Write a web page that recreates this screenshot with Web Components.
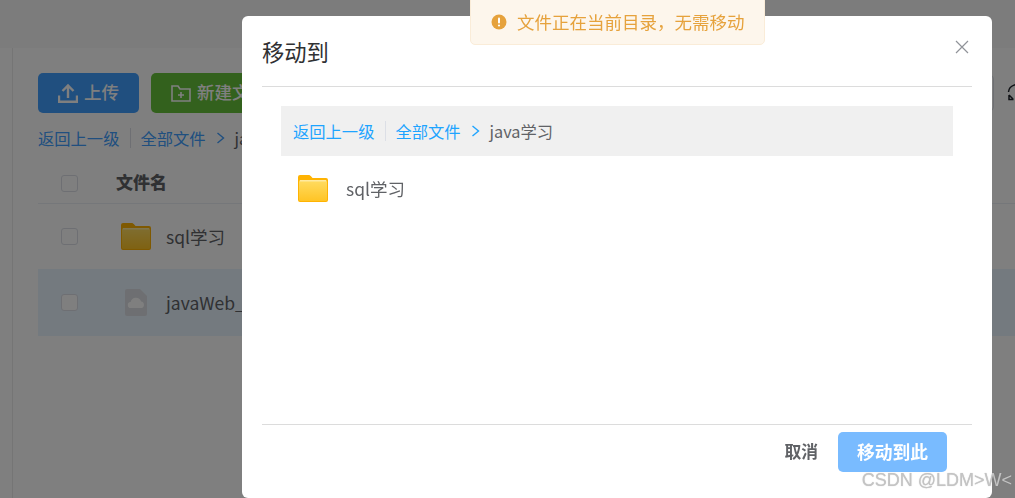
<!DOCTYPE html>
<html lang="zh">
<head>
<meta charset="utf-8">
<title>移动到</title>
<style>
    html, body { margin: 0; height: 100%; overflow: hidden; }
    body { font-family: "Noto Sans CJK SC", "Noto Sans", sans-serif; }
</style>
</head>
<body>
<file-page></file-page>
<move-dialog></move-dialog>
<warn-toast>文件正在当前目录，无需移动</warn-toast>
<water-mark>CSDN @LDM&gt;W&lt;</water-mark>

<script>
const FOLDER = `
    <svg viewBox="0 0 30 27" width="30" height="27">
        <defs>
            <linearGradient id="front" x1="0" y1="0" x2="0" y2="1">
                <stop offset="0" stop-color="#ffdc62"/>
                <stop offset="1" stop-color="#ffc425"/>
            </linearGradient>
        </defs>
        <path d="M2 0h8.500c1 0 1.600.4 2.300 1.100L14.500 3H28a2 2 0 0 1 2 2v20a2 2 0 0 1-2 2H2a2 2 0 0 1-2-2V2a2 2 0 0 1 2-2z" fill="#ffb302"/>
        <rect x="1" y="5" width="28" height="21" rx="1.500" fill="url(#front)"/>
        <rect x="2" y="5" width="26" height="1.500" fill="#ffeaa0"/>
    </svg>`

const ARROW = (color) => `<svg width="9" height="12" viewBox="0 0 9 12" fill="none" stroke="${color}" stroke-width="1.400"><path d="M1.500 1l6 5-6 5"/></svg>`

const pageTemplate = document.createElement('template')
pageTemplate.innerHTML = `
    <style>
        :host {
            display: block;
            height: 498px;
            overflow: hidden;
            background: #fff;
            color: #606266;
        }
        .top { height: 48px; background: #f9f9f9; }
        .body { display: flex; height: 450px; }
        .side { width: 12px; flex: none; border-right: 1px solid #eaeaea; }
        .main { flex: 1; min-width: 0; padding: 25px 0 0 25px; }
        .tools { display: flex; align-items: center; gap: 12px; height: 40px; }
        .btn {
            flex: none;
            box-sizing: border-box;
            display: flex;
            align-items: center;
            gap: 6px;
            height: 40px;
            padding: 0 0 3px 20px;
            border-radius: 5px;
            color: #fff;
            font-size: 17.500px;
            font-weight: 500;
            white-space: nowrap;
        }
        .upload { width: 101px; background: #409eff; }
        .create { width: 154px; background: #67c23a; }
        .btn svg { flex: none; margin-top: 3px; }
        .spacer { flex: 1; }
        .search { flex: none; width: 60px; height: 36px; margin-right: 1px; border: 1px solid #dcdfe6; border-radius: 4px; box-sizing: border-box; }
        .refresh { flex: none; width: 8px; height: 20px; overflow: hidden; margin-bottom: 1px; }
        .crumbs { display: flex; align-items: center; height: 26px; margin-top: 12px; font-size: 16.300px; color: #409eff; }
        .crumbs .back { padding-right: 11px; border-right: 1px solid #dcdfe6; line-height: 20px; margin-right: 9px; }
        .crumbs .arrow { margin: 0 10px; display: flex; }
        .crumbs .cur { color: #606266; }
        .head, .row { display: flex; align-items: center; }
        .head { height: 40px; margin-top: 12px; border-bottom: 1px solid #ebeef5; font-weight: 700; font-size: 17px; color: #606266; }
        .head b { margin-bottom: 3px; }
        .row { height: 65px; font-size: 17.500px; }
        .row.sel { height: 67px; background: #e8f4ff; }
        .check { flex: none; width: 15px; height: 15px; margin: 0 38px 0 23px; border: 1px solid #dcdfe6; border-radius: 3px; background: #fff; }
        .icon { flex: none; width: 30px; margin: 0 15px 0 5px; display: flex; justify-content: center; }
        .doc { flex: none; }
    </style>
    <div class="top"></div>
    <div class="body">
        <div class="side"></div>
        <div class="main">
            <div class="tools">
                <div class="btn upload">
                    <svg width="20" height="20" viewBox="0 0 20 20" fill="none" stroke="#fff" stroke-width="2.400">
                        <path d="M10 15V2.500M4.500 8l5.500-5.500 5.500 5.500"/>
                        <path d="M1 12.500v6.300h18v-6.300"/>
                    </svg>
                    上传
                </div>
                <div class="btn create">
                    <svg width="20" height="17" viewBox="0 0 20 17" fill="none" stroke="#fff" stroke-width="1.600">
                        <path d="M1 1h6l2 3h10v12H1z"/>
                        <path d="M7 10h6M10 7v6"/>
                    </svg>
                    新建文件夹
                </div>
                <div class="spacer"></div>
                <div class="search"></div>
                <div class="refresh">
                    <svg width="20" height="20" viewBox="0 0 20 20" fill="none" stroke="#1d2129" stroke-width="1.500">
                        <path d="M1.500 9a8 8 0 0 1 14-4.500"/>
                        <path d="M2 12l4 4M2 12v4.500h4.500"/>
                    </svg>
                </div>
            </div>
            <div class="crumbs">
                <span class="back">返回上一级</span>
                <span>全部文件</span>
                <span class="arrow">${ARROW('#409eff')}</span>
                <span class="cur">java学习</span>
            </div>
            <div class="head"><span class="check"></span><b>文件名</b></div>
            <div class="row">
                <span class="check"></span>
                <span class="icon">${FOLDER}</span>
                <span>sql学习</span>
            </div>
            <div class="row sel">
                <span class="check"></span>
                <span class="icon">
                    <svg class="doc" width="22" height="27" viewBox="0 0 22 27">
                        <path d="M2 0h13l7 7v18a2 2 0 0 1-2 2H2a2 2 0 0 1-2-2V2a2 2 0 0 1 2-2z" fill="#dcdfe4"/>
                        <path d="M6 19a3 3 0 0 1-.4-6 5.500 5.500 0 0 1 10.500-.5 3.300 3.300 0 0 1 .2 6.500z" fill="#fff"/>
                    </svg>
                </span>
                <span>javaWeb_project</span>
            </div>
        </div>
    </div>
`

class FilePage extends HTMLElement {
    constructor () {
        super()
        this._shadowRoot = this.attachShadow({ mode: 'open' })
        this._shadowRoot.appendChild(pageTemplate.content.cloneNode(true))
    }
}

const dialogTemplate = document.createElement('template')
dialogTemplate.innerHTML = `
    <style>
        :host {
            position: fixed;
            inset: 0;
            box-sizing: border-box;
            padding: 16px 0 0 242px;
            background: rgba(0, 0, 0, .5);
            display: block;
        }
        .dialog {
            box-sizing: border-box;
            width: 750px;
            height: 482px;
            padding: 0 20px;
            background: #fff;
            border-radius: 6px;
            display: flex;
            flex-direction: column;
        }
        .title {
            flex: none;
            display: flex;
            justify-content: space-between;
            height: 70px;
            box-sizing: content-box;
            border-bottom: 1px solid #dcdcdc;
            font-size: 22.300px;
            line-height: 71px;
            color: #303133;
        }
        .close { display: flex; margin: 24px 3px 0 0; }
        .list { flex: 1; padding: 19px 19px 0; }
        .crumbs {
            display: flex;
            align-items: center;
            height: 50px;
            padding-left: 12px;
            background: #f0f0f0;
            font-size: 16.300px;
            color: #1ea4ff;
        }
        .back { padding-right: 11px; border-right: 1px solid #dcdfe6; line-height: 20px; margin-right: 9px; }
        .arrow { margin: 0 10px; display: flex; }
        .cur { color: #606266; }
        .folder { display: flex; align-items: center; gap: 18px; height: 65px; padding-left: 17px; font-size: 17.500px; color: #606266; }
        .folder svg { display: block; }
        .foot {
            flex: none;
            display: flex;
            justify-content: flex-end;
            gap: 20px;
            height: 74px;
            padding: 7px 25px 0 0;
            box-sizing: border-box;
            border-top: 1px solid #dcdcdc;
            font-size: 16.800px;
            font-weight: 700;
        }
        .cancel { color: #606266; line-height: 38px; }
        .ok {
            box-sizing: border-box;
            display: flex;
            align-items: center;
            justify-content: center;
            width: 109px;
            height: 40px;
            padding-bottom: 2px;
            border-radius: 5px;
            background: #79bbff;
            color: #fff;
            font-size: 17.800px;
        }
    </style>
    <div class="dialog">
        <div class="title">
            <span>移动到</span>
            <span class="close">
                <svg width="14" height="14" viewBox="0 0 14 14" fill="none" stroke="#909399" stroke-width="1.200"><path d="M1 1l12 12M13 1L1 13"/></svg>
            </span>
        </div>
        <div class="list">
            <div class="crumbs">
                <span class="back">返回上一级</span>
                <span>全部文件</span>
                <span class="arrow">${ARROW('#1ea4ff')}</span>
                <span class="cur">java学习</span>
            </div>
            <div class="folder">${FOLDER.replace(/front/g, 'front2')}<span>sql学习</span></div>
        </div>
        <div class="foot">
            <span class="cancel">取消</span>
            <span class="ok">移动到此</span>
        </div>
    </div>
`

class MoveDialog extends HTMLElement {
    constructor () {
        super()
        this._shadowRoot = this.attachShadow({ mode: 'open' })
        this._shadowRoot.appendChild(dialogTemplate.content.cloneNode(true))
    }
}

const toastTemplate = document.createElement('template')
toastTemplate.innerHTML = `
    <style>
        :host {
            position: fixed;
            top: -10px;
            left: 470px;
            box-sizing: border-box;
            width: 295px;
            height: 55px;
            padding: 8px 0 0 20px;
            display: flex;
            align-items: center;
            gap: 10px;
            background: #fdf6ec;
            border: 1px solid #faecd8;
            border-radius: 5px;
            color: #e6a23c;
            font-size: 17.500px;
            white-space: nowrap;
        }
        svg { flex: none; }
    </style>
    <svg width="16" height="16" viewBox="0 0 16 16">
        <circle cx="8" cy="8" r="7.500" fill="#e6a23c"/>
        <rect x="7" y="3.500" width="2" height="6" rx="1" fill="#fff"/>
        <circle cx="8" cy="11.500" r="1.100" fill="#fff"/>
    </svg>
    <slot></slot>
`

class WarnToast extends HTMLElement {
    constructor () {
        super()
        this._shadowRoot = this.attachShadow({ mode: 'open' })
        this._shadowRoot.appendChild(toastTemplate.content.cloneNode(true))
    }
}

const markTemplate = document.createElement('template')
markTemplate.innerHTML = `
    <style>
        :host {
            position: fixed;
            right: 3px;
            bottom: 7px;
            font-family: "Liberation Sans", Arial, sans-serif;
            font-size: 18px;
            line-height: 22px;
            color: #c4c4c4;
            text-shadow: 0 0 1px rgba(110, 110, 110, .4);
            white-space: nowrap;
        }
    </style>
    <slot></slot>
`

class WaterMark extends HTMLElement {
    constructor () {
        super()
        this._shadowRoot = this.attachShadow({ mode: 'open' })
        this._shadowRoot.appendChild(markTemplate.content.cloneNode(true))
    }
}

customElements.define('file-page', FilePage)
customElements.define('move-dialog', MoveDialog)
customElements.define('warn-toast', WarnToast)
customElements.define('water-mark', WaterMark)
</script>
</body>
</html>
